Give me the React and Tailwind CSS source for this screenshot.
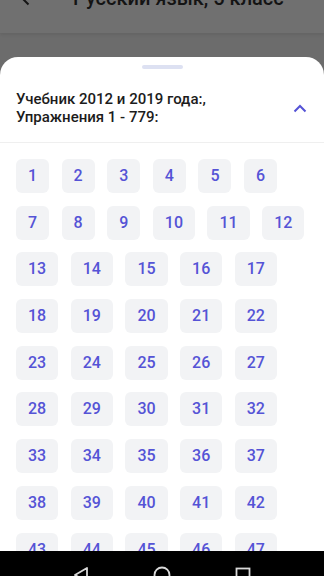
import React from "react";

const rows = [];
for (let i = 1; i <= 60; i++) rows.push(i);

export default function App() {
  return (
    <div
      className="w-[324px] h-[576px] overflow-hidden flex flex-col bg-[#6c6c6c]"
      style={{ fontFamily: "Roboto, 'Noto Sans', sans-serif" }}
    >
      {/* dimmed app bar */}
      <div className="h-[57px] shrink-0 flex flex-col">
        <div className="h-[33px] overflow-hidden bg-[#707070] shadow-[0_2px_3px_rgba(0,0,0,0.08)]">
          <div className="-mt-[16px] h-[28px] flex items-center">
            <div className="w-[20px]" />
            <svg width="17" height="16" viewBox="0 0 17 16" className="text-[#141414]">
              <path d="M16 8H2M8.5 1.5L2 8l6.5 6.5" fill="none" stroke="currentColor" strokeWidth="2" />
            </svg>
            <div className="ml-[36px] text-[20px] font-medium text-[#141414] leading-[28px] whitespace-nowrap">
              Русский язык, 5 класс
            </div>
          </div>
        </div>
      </div>

      {/* bottom sheet */}
      <div className="flex-1 min-h-0 bg-white rounded-t-[18px] overflow-hidden flex flex-col">
        <div className="pt-[8px] flex justify-center">
          <div className="w-[41px] h-[4px] rounded-full bg-[#dde1f2]" />
        </div>
        <div className="pt-[22px] pb-[16px] pl-[16px] pr-[16px] flex items-center justify-between border-b border-[#efefef]">
          <div className="text-[15px] leading-[17.5px] font-medium text-[#1c1c1c]">
            Учебник 2012 и 2019 года:,
            <br />
            Упражнения 1 - 779:
          </div>
          <svg width="14" height="9" viewBox="0 0 14 9" className="text-[#5553d6] mr-[1px]">
            <path d="M1.5 7.5L7 2l5.5 5.5" fill="none" stroke="currentColor" strokeWidth="2" />
          </svg>
        </div>
        <div className="pt-[16px] px-[16px] flex flex-wrap gap-x-[12.5px] gap-y-[12.7px]">
          {rows.map((n) => (
            <div
              key={n}
              className="h-[34px] px-[12px] rounded-[6px] bg-[#f2f3f5] flex items-center justify-center text-[16px] font-medium text-[#5553d6]"
            >
              {n}
            </div>
          ))}
        </div>
      </div>

      {/* nav bar */}
      <div className="h-[25px] shrink-0 bg-black overflow-hidden">
        <div className="h-[48px] flex items-center justify-around px-[40px]">
          <svg width="18" height="18" viewBox="0 0 18 18" className="text-[#d8d8d8]">
            <path d="M15 2L3 9l12 7z" fill="none" stroke="currentColor" strokeWidth="1.8" strokeLinejoin="round" />
          </svg>
          <svg width="18" height="18" viewBox="0 0 18 18" className="text-[#d8d8d8]">
            <circle cx="9" cy="9" r="7.5" fill="none" stroke="currentColor" strokeWidth="1.8" />
          </svg>
          <svg width="18" height="18" viewBox="0 0 18 18" className="text-[#d8d8d8]">
            <rect x="2.5" y="2.5" width="13" height="13" fill="none" stroke="currentColor" strokeWidth="1.8" />
          </svg>
        </div>
      </div>
    </div>
  );
}
